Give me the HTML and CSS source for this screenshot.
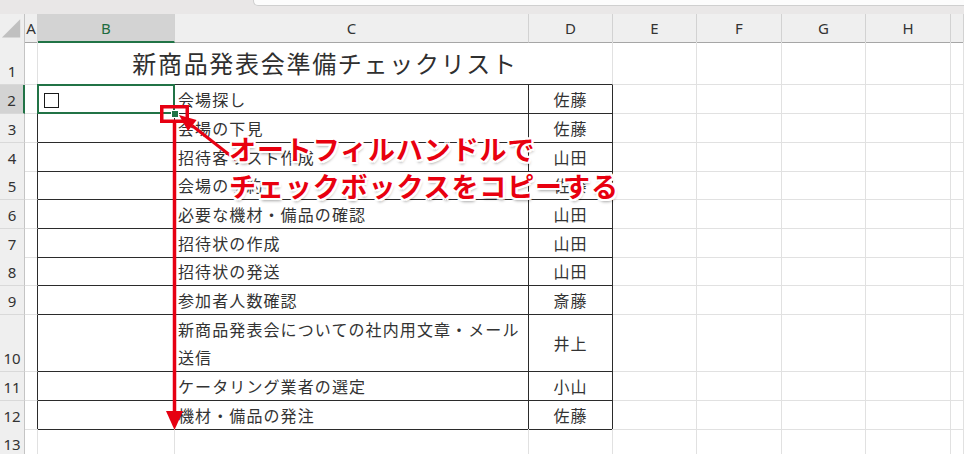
FILE: index.html
```html
<!DOCTYPE html>
<html lang="ja">
<head>
<meta charset="utf-8">
<title>新商品発表会準備チェックリスト</title>
<link rel="stylesheet" href="styles.css">
</head>
<body>
<div class="app">
  <div class="topbar"><div class="fbar"></div></div>
  <div class="sheet">
    <div class="row hdr">
      <div class="h corner"><svg width="25" height="28" viewBox="0 0 25 28"><polygon points="21,5 21,24 2,24" fill="#c0c0c0"/></svg></div>
      <div class="h">A</div>
      <div class="h hsel">B</div>
      <div class="h">C</div>
      <div class="h">D</div>
      <div class="h">E</div>
      <div class="h">F</div>
      <div class="h">G</div>
      <div class="h">H</div>
      <div class="h"></div>
    </div>
    <div class="row r1">
      <div class="n">1</div><div class="c"></div>
      <div class="c title">新商品発表会準備チェックリスト</div>
      <div class="c"></div><div class="c"></div><div class="c"></div><div class="c"></div><div class="c"></div>
    </div>
    <div class="row">
      <div class="n nsel">2</div><div class="c tl"></div>
      <div class="c t sel"><span class="box"></span></div>
      <div class="c t txt">会場探し</div><div class="c t nm">佐藤</div>
      <div class="c"></div><div class="c"></div><div class="c"></div><div class="c"></div><div class="c"></div>
    </div>
    <div class="row">
      <div class="n">3</div><div class="c tl"></div><div class="c t"></div>
      <div class="c t txt">会場の下見</div><div class="c t nm">佐藤</div>
      <div class="c"></div><div class="c"></div><div class="c"></div><div class="c"></div><div class="c"></div>
    </div>
    <div class="row s28">
      <div class="n">4</div><div class="c tl"></div><div class="c t"></div>
      <div class="c t txt">招待客リスト作成</div><div class="c t nm">山田</div>
      <div class="c"></div><div class="c"></div><div class="c"></div><div class="c"></div><div class="c"></div>
    </div>
    <div class="row">
      <div class="n">5</div><div class="c tl"></div><div class="c t"></div>
      <div class="c t txt">会場の予約</div><div class="c t nm">佐藤</div>
      <div class="c"></div><div class="c"></div><div class="c"></div><div class="c"></div><div class="c"></div>
    </div>
    <div class="row">
      <div class="n">6</div><div class="c tl"></div><div class="c t"></div>
      <div class="c t txt">必要な機材・備品の確認</div><div class="c t nm">山田</div>
      <div class="c"></div><div class="c"></div><div class="c"></div><div class="c"></div><div class="c"></div>
    </div>
    <div class="row s28">
      <div class="n">7</div><div class="c tl"></div><div class="c t"></div>
      <div class="c t txt">招待状の作成</div><div class="c t nm">山田</div>
      <div class="c"></div><div class="c"></div><div class="c"></div><div class="c"></div><div class="c"></div>
    </div>
    <div class="row">
      <div class="n">8</div><div class="c tl"></div><div class="c t"></div>
      <div class="c t txt">招待状の発送</div><div class="c t nm">山田</div>
      <div class="c"></div><div class="c"></div><div class="c"></div><div class="c"></div><div class="c"></div>
    </div>
    <div class="row">
      <div class="n">9</div><div class="c tl"></div><div class="c t"></div>
      <div class="c t txt">参加者人数確認</div><div class="c t nm">斎藤</div>
      <div class="c"></div><div class="c"></div><div class="c"></div><div class="c"></div><div class="c"></div>
    </div>
    <div class="row r10">
      <div class="n">10</div><div class="c tl"></div><div class="c t"></div>
      <div class="c t txt">新商品発表会についての社内用文章・メール<br>送信</div><div class="c t nm">井上</div>
      <div class="c"></div><div class="c"></div><div class="c"></div><div class="c"></div><div class="c"></div>
    </div>
    <div class="row">
      <div class="n">11</div><div class="c tl"></div><div class="c t"></div>
      <div class="c t txt">ケータリング業者の選定</div><div class="c t nm">小山</div>
      <div class="c"></div><div class="c"></div><div class="c"></div><div class="c"></div><div class="c"></div>
    </div>
    <div class="row s28">
      <div class="n">12</div><div class="c tl"></div><div class="c t"></div>
      <div class="c t txt">機材・備品の発注</div><div class="c t nm">佐藤</div>
      <div class="c"></div><div class="c"></div><div class="c"></div><div class="c"></div><div class="c"></div>
    </div>
    <div class="row">
      <div class="n">13</div><div class="c"></div><div class="c"></div>
      <div class="c"></div><div class="c"></div>
      <div class="c"></div><div class="c"></div><div class="c"></div><div class="c"></div><div class="c"></div>
    </div>
  </div>

  <svg class="marks" width="964" height="454" viewBox="0 0 964 454">
    <rect x="161.75" y="106.75" width="25.5" height="14.5" fill="none" stroke="#e60012" stroke-width="3.5"/>
    <line x1="192" y1="125.5" x2="236" y2="160" stroke="#e60012" stroke-width="3"/>
    <polygon points="179,115 188,131.1 196.6,120.1" fill="#e60012"/>
    <line x1="174.5" y1="122" x2="174.5" y2="414" stroke="#e60012" stroke-width="3.5"/>
    <polygon points="166,411 183,411 174.5,430" fill="#e60012"/>
  </svg>

  <div class="callout">
    <p>オートフィルハンドルで</p>
    <p>チェックボックスをコピーする</p>
  </div>
</div>
</body>
</html>
```

FILE: styles.css
```css
html, body {
  margin: 0;
  padding: 0;
  background: #ffffff;
}

.app {
  position: relative;
  width: 964px;
  height: 454px;
  overflow: hidden;
  background: #ffffff;
  font-family: "Noto Sans CJK JP", "Noto Sans", sans-serif;
}

.topbar {
  height: 14px;
  background: #e9e7e7;
}

.fbar {
  margin-left: 253px;
  height: 5px;
  background: #fcfcfc;
  border-left: 1px solid #cfcfcf;
  border-bottom: 1px solid #cfcfcf;
  border-bottom-left-radius: 5px;
}

.row {
  display: grid;
  grid-template-columns: 25px 13px 137px 354px 84px 84px 85px 84px 85px 1fr;
  height: 29px;
}

.row.hdr { height: 28px; }
.row.r1 { height: 43px; }
.row.s28 { height: 28px; }
.row.r10 { height: 57px; }

.row > div {
  box-sizing: border-box;
  min-width: 0;
}

.h {
  background: #efefef;
  border-right: 1px solid #d2d2d2;
  border-bottom: 1px solid #a6a6a6;
  display: flex;
  align-items: center;
  justify-content: center;
  font-family: "Noto Sans", "Liberation Sans", sans-serif;
  font-size: 15px;
  color: #333333;
}

.h.corner {
  border-right-color: #c4c4c4;
  align-items: stretch;
  justify-content: stretch;
}

.h.hsel {
  background: #d3d3d3;
  color: #1e6b40;
  border-bottom: 2px solid #217346;
}

.n {
  background: #efefef;
  border-right: 1px solid #c4c4c4;
  border-bottom: 1px solid #d9d9d9;
  display: flex;
  align-items: flex-end;
  justify-content: center;
  padding-bottom: 3px;
  font-family: "Noto Sans", "Liberation Sans", sans-serif;
  font-size: 15px;
  line-height: 20px;
  color: #333333;
}

.n.nsel {
  background: #d3d3d3;
  border-right: 2px solid #217346;
}

.c {
  border-right: 1px solid #e1e1e1;
  border-bottom: 1px solid #e1e1e1;
  display: flex;
  align-items: flex-end;
  font-size: 16px;
  line-height: 28px;
  color: #333333;
  letter-spacing: 1.1px;
}

.c.tl {
  border-right-color: #2b2b2b;
}

.c.t {
  border-right-color: #2b2b2b;
  border-bottom-color: #2b2b2b;
}

.c.title {
  grid-column: span 3;
  justify-content: center;
  font-size: 24px;
  line-height: 32px;
  letter-spacing: 1.7px;
  padding-bottom: 5px;
  border-bottom-color: #2b2b2b;
  color: #2f2f2f;
}

.c.txt {
  padding-left: 3px;
  white-space: nowrap;
}

.c.nm {
  justify-content: center;
  align-items: center;
}

.c.sel {
  position: relative;
}

.c.sel::before {
  content: "";
  position: absolute;
  left: -1px;
  top: -1px;
  width: 138px;
  height: 30px;
  box-sizing: border-box;
  border: 2px solid #217346;
  z-index: 2;
}

.c.sel::after {
  content: "";
  position: absolute;
  left: 134px;
  top: 26px;
  width: 6px;
  height: 6px;
  background: #217346;
  outline: 1px solid #ffffff;
  z-index: 3;
}

.box {
  width: 15px;
  height: 15px;
  box-sizing: border-box;
  border: 1px solid #1a1a1a;
  margin-left: 6px;
  margin-bottom: 5px;
}

.marks {
  position: absolute;
  left: 0;
  top: 0;
  z-index: 5;
}

.callout {
  position: absolute;
  left: 229px;
  top: 130px;
  z-index: 6;
  font-family: "Noto Sans CJK JP", sans-serif;
  font-weight: 700;
  font-size: 27px;
  line-height: 37px;
  letter-spacing: 0.9px;
  color: #e8000f;
  white-space: nowrap;
  text-shadow:
    2px 0 #fff, -2px 0 #fff, 0 2px #fff, 0 -2px #fff,
    2px 2px #fff, -2px -2px #fff, 2px -2px #fff, -2px 2px #fff,
    1px 3px 3px rgba(0, 0, 0, 0.35);
}

.callout p {
  margin: 0;
}
```
